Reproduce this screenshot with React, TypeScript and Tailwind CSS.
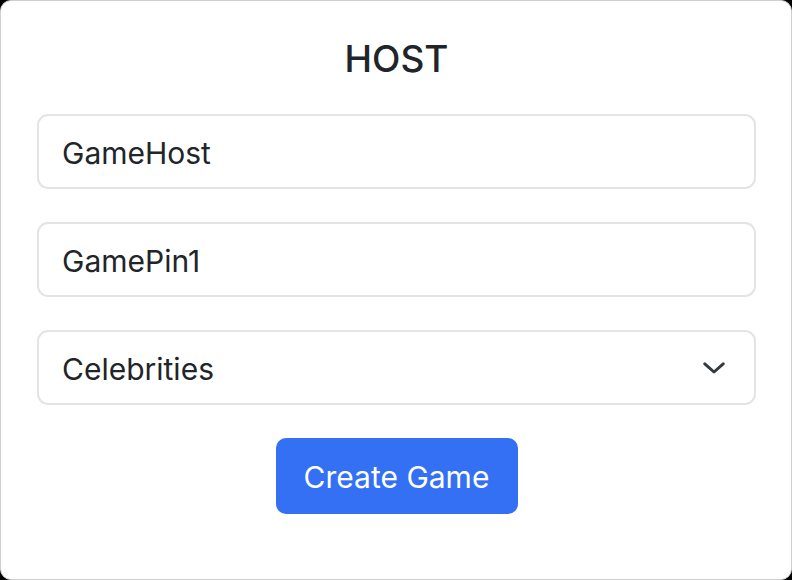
import { useState } from "react";

const font = "font-['Inter','Liberation_Sans',sans-serif]";

function ChevronDown() {
  return (
    <svg width="22" height="12" viewBox="0 0 22 12" fill="none" aria-hidden="true">
      <path
        d="M1.8 1.8 L11 10 L20.2 1.8"
        stroke="#343a40"
        strokeWidth="3"
        strokeLinecap="round"
        strokeLinejoin="round"
      />
    </svg>
  );
}

export default function App() {
  const [name, setName] = useState("GameHost");
  const [pin, setPin] = useState("GamePin1");

  return (
    <div className={`h-[580px] w-[792px] bg-black ${font}`}>
      <div className="flex h-full w-full flex-col rounded-[11px] border border-[#cfcfcf] bg-white pt-[36px] pr-[35px] pl-[36px]">
        <h2 className="text-center text-[37px] leading-[44px] font-medium text-[#212529]">
          HOST
        </h2>

        <div className="mt-[33px] flex flex-col gap-[33px]">
          <input
            value={name}
            onChange={(e) => setName(e.target.value)}
            className="h-[75px] w-full rounded-[11px] border-2 border-[#e2e4e7] bg-white px-[23px] pt-[2px] text-[30px] text-[#212529] outline-none"
          />
          <input
            value={pin}
            onChange={(e) => setPin(e.target.value)}
            className="h-[75px] w-full rounded-[11px] border-2 border-[#e2e4e7] bg-white px-[23px] pt-[2px] text-[30px] text-[#212529] outline-none"
          />
          <div className="flex h-[75px] w-full items-center justify-between rounded-[11px] border-2 border-[#e2e4e7] bg-white pr-[29px] pl-[23px]">
            <span className="pt-[3px] text-[30px] text-[#212529]">Celebrities</span>
            <ChevronDown />
          </div>
        </div>

        <div className="mt-[33px] flex justify-center">
          <button
            type="button"
            className="h-[76px] w-[242px] rounded-[10px] bg-[#3470f3] pt-[2px] text-[30px] text-white"
          >
            Create Game
          </button>
        </div>
      </div>
    </div>
  );
}
